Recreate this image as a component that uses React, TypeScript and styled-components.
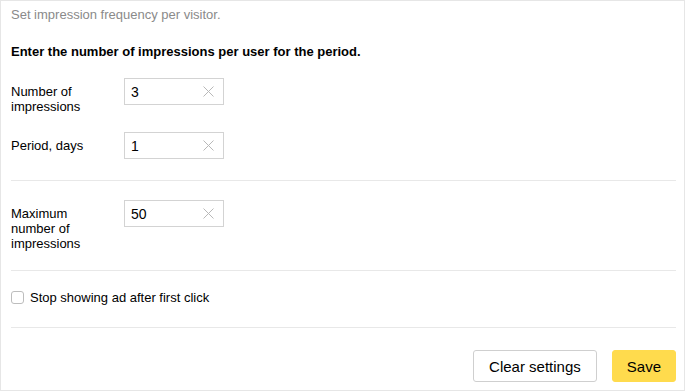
import styled, { createGlobalStyle } from 'styled-components';

const GlobalStyle = createGlobalStyle`
  html, body {
    margin: 0;
    padding: 0;
    background: #ffffff;
  }

  body {
    font-family: 'Liberation Sans', Arial, sans-serif;
    color: #000000;
  }

  * {
    box-sizing: border-box;
  }
`;

interface IField {
  id: string;
  label: string;
  value: string;
}

const frequencyFields: IField[] = [
  { id: 'impressions', label: 'Number of impressions', value: '3' },
  { id: 'period', label: 'Period, days', value: '1' },
];

const limitFields: IField[] = [
  { id: 'max', label: 'Maximum number of impressions', value: '50' },
];

function ClearIcon(): JSX.Element {
  return (
    <ClearButton type="button" aria-label="Clear">
      <svg width="11" height="11" viewBox="0 0 11 11">
        <path d="M0.5 0.5 L10.5 10.5 M10.5 0.5 L0.5 10.5" stroke="#b8b8b8" strokeWidth="1" fill="none" />
      </svg>
    </ClearButton>
  );
}

function FieldRow({ field }: { field: IField }): JSX.Element {
  return (
    <Row>
      <Label htmlFor={field.id}>{field.label}</Label>
      <InputBox>
        <Input id={field.id} defaultValue={field.value} />
        <ClearIcon />
      </InputBox>
    </Row>
  );
}

function App(): JSX.Element {
  return (
    <>
      <GlobalStyle />
      <Frame>
        <Intro>Set impression frequency per visitor.</Intro>
        <Heading>Enter the number of impressions per user for the period.</Heading>

        <Group $bottom={21}>
          {frequencyFields.map(el => (
            <FieldRow key={el.id} field={el} />
          ))}
        </Group>

        <Group $bottom={19}>
          {limitFields.map(el => (
            <FieldRow key={el.id} field={el} />
          ))}
        </Group>

        <CheckRow>
          <Checkbox type="checkbox" id="stop" />
          <CheckText htmlFor="stop">Stop showing ad after first click</CheckText>
        </CheckRow>

        <Footer>
          <Button type="button">Clear settings</Button>
          <Button type="button" $primary>
            Save
          </Button>
        </Footer>
      </Frame>
    </>
  );
}

export default App;

const Frame = styled.div`
  display: flex;
  flex-direction: column;
  width: 685px;
  height: 391px;
  padding: 6px 8px 0 10px;
  border: 1px solid #e6e6e6;
  background-color: #ffffff;
  font-size: 13px;
  line-height: 15px;
`;

const Intro = styled.p`
  margin: 0;
  color: #8a8a8a;
`;

const Heading = styled.p`
  margin: 22px 0 0;
  font-weight: 700;
  color: #000000;
`;

const Group = styled.div<{ $bottom: number }>`
  display: flex;
  flex-direction: column;
  gap: 18px;
  padding-top: 19px;
  padding-bottom: ${p => p.$bottom}px;
  border-bottom: 1px solid #e8e8e8;
`;

const Row = styled.div`
  display: flex;
  align-items: flex-start;
`;

const Label = styled.label`
  width: 113px;
  padding-top: 6px;
  padding-right: 20px;
  color: #000000;
`;

const InputBox = styled.div`
  display: flex;
  align-items: center;
  width: 100px;
  height: 27px;
  border: 1px solid #d3d3d3;
  background-color: #ffffff;
`;

const Input = styled.input`
  flex: 1;
  min-width: 0;
  height: 100%;
  padding: 0 0 0 6px;
  border: none;
  outline: none;
  background: transparent;
  font-family: inherit;
  font-size: 14px;
  color: #000000;
`;

const ClearButton = styled.button`
  display: flex;
  align-items: center;
  justify-content: center;
  width: 11px;
  height: 11px;
  margin-right: 9px;
  padding: 0;
  border: none;
  background: none;
`;

const CheckRow = styled.div`
  display: flex;
  align-items: center;
  padding: 19px 0 22px;
  border-bottom: 1px solid #e8e8e8;
`;

const Checkbox = styled.input`
  appearance: none;
  width: 13px;
  height: 13px;
  margin: 0 6px 0 0;
  border: 1px solid #bdbdbd;
  border-radius: 3px;
  background-color: #ffffff;
`;

const CheckText = styled.label`
  color: #000000;
`;

const Footer = styled.div`
  display: flex;
  justify-content: flex-end;
  gap: 15px;
  padding-top: 22px;
`;

const Button = styled.button<{ $primary?: boolean }>`
  height: 32px;
  padding: 0 ${p => (p.$primary ? 14 : 15)}px;
  border: 1px solid ${p => (p.$primary ? '#ffdb4d' : '#cfcfcf')};
  border-radius: 3px;
  background-color: ${p => (p.$primary ? '#ffdb4d' : '#ffffff')};
  font-family: inherit;
  font-size: 15px;
  color: #000000;
`;
